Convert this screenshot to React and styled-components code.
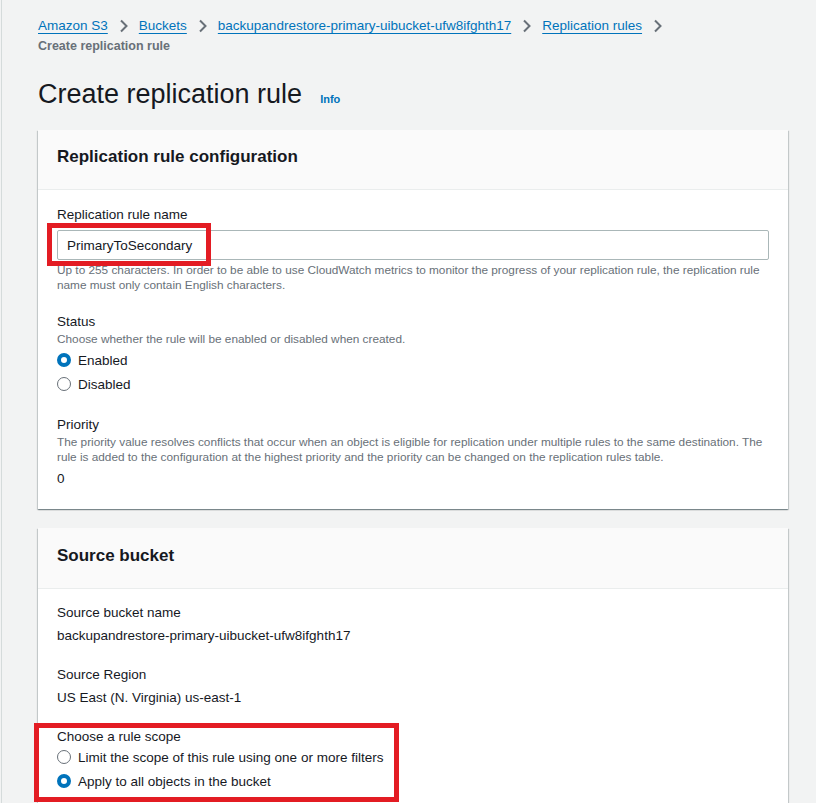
import React from "react";
import styled, { createGlobalStyle } from "styled-components";

const GlobalStyle = createGlobalStyle`
  html, body {
    margin: 0;
    padding: 0;
    background: #f2f3f3;
  }
  body {
    font-family: "Liberation Sans", Arial, sans-serif;
    color: #16191f;
  }
`;

const Page = styled.div`
  min-height: 803px;
  border-left: 1px solid #d5dbdb;
  margin-left: 1px;
  padding: 15px 28px 0 36px;
  box-sizing: border-box;
`;

const Breadcrumbs = styled.nav`
  display: flex;
  flex-wrap: wrap;
  align-items: center;
  font-size: 13.5px;
  line-height: 21px;
`;

const Crumb = styled.a`
  color: #0073bb;
  text-decoration: underline;
  text-underline-offset: 3px;
  cursor: pointer;
`;

const Current = styled.span`
  color: #687078;
  font-weight: bold;
  font-size: 12.5px;
  width: 100%;
`;

const Chevron = styled.span`
  display: inline-flex;
  align-items: center;
  margin: 0 10px 0 11px;
`;

const TitleRow = styled.div`
  display: flex;
  align-items: baseline;
  gap: 18px;
  margin: 19px 0 18px;
`;

const H1 = styled.h1`
  margin: 0;
  font-size: 27px;
  line-height: 36px;
  font-weight: normal;
  color: #16191f;
`;

const Info = styled.a`
  color: #0073bb;
  font-size: 11px;
  font-weight: bold;
`;

const Card = styled.section`
  background: #fff;
  box-shadow: 0 1px 1px 0 rgba(0, 28, 36, 0.3), 1px 1px 1px 0 rgba(0, 28, 36, 0.15),
    -1px 1px 1px 0 rgba(0, 28, 36, 0.15);
  margin-bottom: 19px;
`;

const CardHeader = styled.header`
  background: #fafafa;
  border-bottom: 1px solid #eaeded;
  padding: ${(p) => p.$top || 15}px 19px 20px;
  h2 {
    margin: 0;
    font-size: 17px;
    line-height: 24px;
    font-weight: bold;
  }
`;

const CardBody = styled.div`
  padding: ${(p) => p.$top || 15}px 19px 21px;
  display: flex;
  flex-direction: column;
  gap: ${(p) => p.$gap || 19}px;
`;

const Field = styled.div`
  display: flex;
  flex-direction: column;
  position: relative;
  margin-top: ${(p) => p.$shift || 0}px;
`;

const Label = styled.div`
  font-size: 13.5px;
  line-height: 18px;
`;

const Desc = styled.div`
  font-size: 11.8px;
  line-height: 15px;
  color: #687078;
  margin-top: ${(p) => p.$top || 0}px;
`;

const Value = styled.div`
  font-size: 13.5px;
  line-height: 18px;
  margin-top: ${(p) => p.$top || 0}px;
`;

const InputWrap = styled.div`
  position: relative;
  margin: 6px 0 3px;
`;

const Input = styled.input`
  display: block;
  width: 100%;
  box-sizing: border-box;
  height: 30px;
  border: 1px solid #aab7b8;
  border-radius: 2px;
  padding: 0 9px;
  font-family: inherit;
  font-size: 13.5px;
  color: #16191f;
  background: #fff;
  outline: none;
`;

const Annotation = styled.div`
  position: absolute;
  border: 5px solid #e31c23;
  pointer-events: none;
  box-sizing: border-box;
`;

const RadioGroup = styled.div`
  display: flex;
  flex-direction: column;
  margin-top: ${(p) => p.$top || 0}px;
`;

const RadioRow = styled.label`
  display: flex;
  align-items: center;
  gap: 7px;
  height: 24px;
  font-size: 13.5px;
`;

const RadioDot = styled.span`
  width: 14px;
  height: 14px;
  box-sizing: border-box;
  border-radius: 50%;
  border: ${(p) => (p.$checked ? "4px solid #0073bb" : "1.5px solid #687078")};
  background: #fff;
  flex-shrink: 0;
`;

const ChevronIcon = () => (
  <svg width="10" height="14" viewBox="0 0 10 14">
    <path d="M2 1.5 L7.5 7 L2 12.5" fill="none" stroke="#687078" strokeWidth="2" />
  </svg>
);

const Radio = ({ checked, children }) => (
  <RadioRow>
    <RadioDot $checked={checked} />
    {children}
  </RadioRow>
);

const crumbs = [
  "Amazon S3",
  "Buckets",
  "backupandrestore-primary-uibucket-ufw8ifghth17",
  "Replication rules",
];

export default function App() {
  return (
    <>
      <GlobalStyle />
      <Page>
        <Breadcrumbs>
          {crumbs.map((c) => (
            <React.Fragment key={c}>
              <Crumb>{c}</Crumb>
              <Chevron>
                <ChevronIcon />
              </Chevron>
            </React.Fragment>
          ))}
          <Current>Create replication rule</Current>
        </Breadcrumbs>

        <TitleRow>
          <H1>Create replication rule</H1>
          <Info>Info</Info>
        </TitleRow>

        <Card>
          <CardHeader>
            <h2>Replication rule configuration</h2>
          </CardHeader>
          <CardBody $top={16}>
            <Field>
              <Label>Replication rule name</Label>
              <InputWrap>
                <Input defaultValue="PrimaryToSecondary" />
                <Annotation style={{ left: -10, top: -7, width: 164, height: 43 }} />
              </InputWrap>
              <Desc>
                Up to 255 characters. In order to be able to use CloudWatch metrics to monitor the
                progress of your replication rule, the replication rule name must only contain
                English characters.
              </Desc>
            </Field>
            <Field $shift={1}>
              <Label>Status</Label>
              <Desc $top={1}>Choose whether the rule will be enabled or disabled when created.</Desc>
              <RadioGroup $top={1}>
                <Radio checked>Enabled</Radio>
                <Radio>Disabled</Radio>
              </RadioGroup>
            </Field>
            <Field $shift={1}>
              <Label>Priority</Label>
              <Desc $top={1}>
                The priority value resolves conflicts that occur when an object is eligible for
                replication under multiple rules to the same destination. The rule is added to the
                configuration at the highest priority and the priority can be changed on the
                replication rules table.
              </Desc>
              <Value $top={5}>0</Value>
            </Field>
          </CardBody>
        </Card>

        <Card>
          <CardHeader $top={16}>
            <h2>Source bucket</h2>
          </CardHeader>
          <CardBody $gap={21} $top={15}>
            <Field>
              <Label>Source bucket name</Label>
              <Value $top={5}>backupandrestore-primary-uibucket-ufw8ifghth17</Value>
            </Field>
            <Field>
              <Label>Source Region</Label>
              <Value $top={5}>US East (N. Virginia) us-east-1</Value>
            </Field>
            <Field>
              <Label>Choose a rule scope</Label>
              <RadioGroup $top={-1}>
                <Radio>Limit the scope of this rule using one or more filters</Radio>
                <Radio checked>Apply to all objects in the bucket</Radio>
              </RadioGroup>
              <Annotation style={{ left: -23, top: -5, width: 365, height: 79 }} />
            </Field>
          </CardBody>
        </Card>
      </Page>
    </>
  );
}
